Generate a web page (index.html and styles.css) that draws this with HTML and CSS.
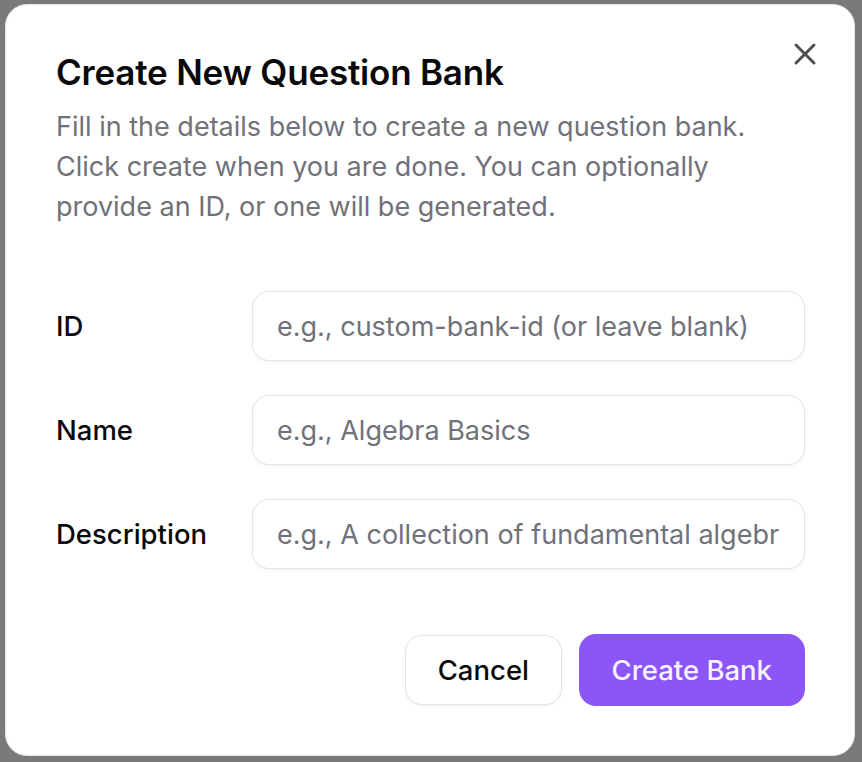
FILE: index.html
```html
<!DOCTYPE html>
<html lang="en">
<head>
<meta charset="utf-8">
<title>Create New Question Bank</title>
<link rel="stylesheet" href="styles.css">
</head>
<body>
<div class="overlay">
  <div class="dialog" role="dialog">
    <button class="close" aria-label="Close">
      <svg viewBox="0 0 24 24" width="36" height="36" fill="none" stroke="currentColor" stroke-width="2" stroke-linecap="round" stroke-linejoin="round"><path d="M18 6 6 18"/><path d="m6 6 12 12"/></svg>
    </button>
    <div class="header">
      <h2 class="title">Create New Question Bank</h2>
      <p class="desc">Fill in the details below to create a new question bank. Click create when you are done. You can optionally provide an ID, or one will be generated.</p>
    </div>
    <div class="form">
      <label class="label" for="f-id">ID</label>
      <input class="input" id="f-id" placeholder="e.g., custom-bank-id (or leave blank)">
      <label class="label" for="f-name">Name</label>
      <input class="input" id="f-name" placeholder="e.g., Algebra Basics">
      <label class="label" for="f-desc">Description</label>
      <input class="input" id="f-desc" placeholder="e.g., A collection of fundamental algebra concepts">
    </div>
    <div class="footer">
      <button class="btn btn-outline">Cancel</button>
      <button class="btn btn-primary">Create Bank</button>
    </div>
  </div>
</div>
</body>
</html>
```
FILE: styles.css
```css
* { box-sizing: border-box; }
html, body { margin: 0; padding: 0; }
body {
  background: #7a7a7a;
  font-family: Inter, "Noto Sans", sans-serif;
  color: #09090b;
  width: 862px;
  height: 762px;
  overflow: hidden;
}
.overlay {
  padding: 4px 0 0 5px;
}
.dialog {
  position: relative;
  width: 850px;
  background: #ffffff;
  border: 1px solid #e4e4e7;
  border-radius: 22px;
  padding: 47px 49px 49px 50px;
}
.close {
  position: absolute;
  top: 31px;
  right: 31px;
  width: 36px;
  height: 36px;
  padding: 0;
  border: 0;
  background: transparent;
  color: #4f4f52;
  display: flex;
}
.header {
  display: flex;
  flex-direction: column;
  gap: 15px;
}
.title {
  margin: 0;
  font-size: 35px;
  line-height: 40px;
  font-weight: 600;
  letter-spacing: -0.2px;
}
.desc {
  margin: 0;
  font-size: 27px;
  line-height: 40px;
  color: #71717a;
}
.form {
  margin-top: 64px;
  display: grid;
  grid-template-columns: 161px 1fr;
  column-gap: 35px;
  row-gap: 34px;
  align-items: center;
}
.label {
  font-size: 27.5px;
  font-weight: 500;
  line-height: 32px;
}
.input {
  height: 70px;
  width: 100%;
  border: 1px solid #e4e4e7;
  border-radius: 17px;
  padding: 0 24px;
  font-family: inherit;
  font-size: 27px;
  color: #09090b;
  background: #fff;
  box-shadow: 0 1px 3px rgba(0,0,0,0.06);
  outline: none;
}
.input::placeholder { color: #71717a; }
.footer {
  margin-top: 65px;
  display: flex;
  justify-content: flex-end;
  gap: 17px;
}
.btn {
  height: 72px;
  border-radius: 17px;
  padding: 0 33px;
  font-family: inherit;
  font-size: 27.5px;
  font-weight: 500;
}
.btn-outline {
  height: 70px;
  margin-top: 1px;
  padding: 0 31.5px;
  background: #fff;
  border: 1px solid #e4e4e7;
  color: #09090b;
  box-shadow: 0 1px 3px rgba(0,0,0,0.06);
}
.btn-primary {
  background: #8b55f7;
  border: 0;
  color: #f5f3ff;
}
```
